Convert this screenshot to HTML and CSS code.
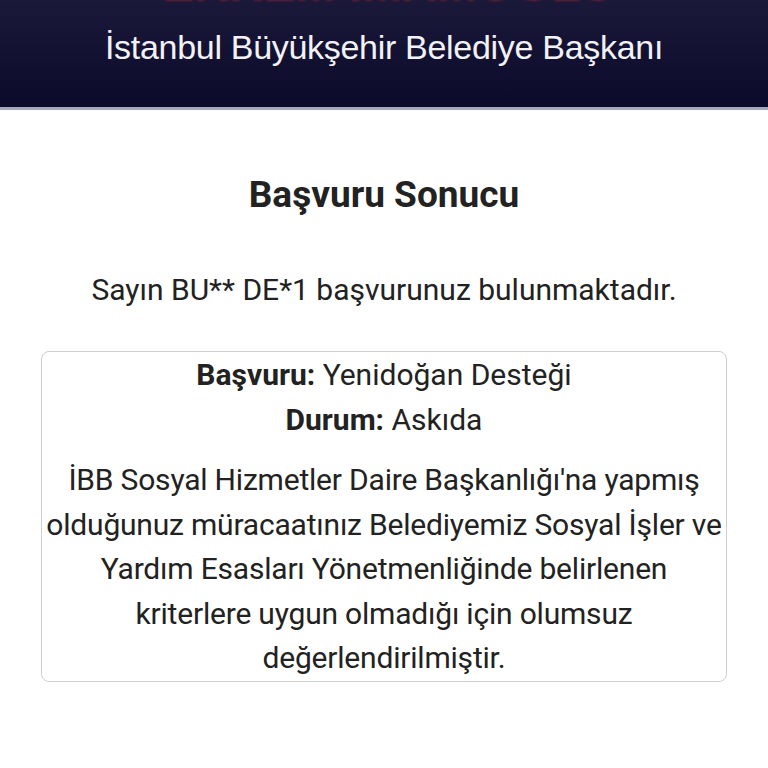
FILE: index.html
```html
<!DOCTYPE html>
<html lang="tr">
<head>
<meta charset="utf-8">
<link rel="stylesheet" href="styles.css">
</head>
<body>
<header class="hero">
  <div class="name">EKREM İMAMOĞLU</div>
  <div class="subtitle">İstanbul Büyükşehir Belediye Başkanı</div>
</header>
<main class="content">
  <h1 class="title">Başvuru Sonucu</h1>
  <p class="greeting">Sayın BU** DE*1 başvurunuz bulunmaktadır.</p>
  <div class="result">
    <div class="row"><b>Başvuru:</b> Yenidoğan Desteği</div>
    <div class="row"><b>Durum:</b> Askıda</div>
    <p class="desc">İBB Sosyal Hizmetler Daire Başkanlığı'na yapmış olduğunuz müracaatınız Belediyemiz Sosyal İşler ve Yardım Esasları Yönetmenliğinde belirlenen kriterlere uygun olmadığı için olumsuz değerlendirilmiştir.</p>
  </div>
</main>
</body>
</html>
```
FILE: styles.css
```css
html, body {
  margin: 0;
  padding: 0;
  background: #ffffff;
}
body {
  font-family: Roboto, "Liberation Sans", Arial, sans-serif;
  color: #222222;
}
.hero {
  height: 107px;
  background: linear-gradient(#1b1939, #0b0a2b);
  border-bottom: 3px solid #a3a8bc;
  overflow: hidden;
  text-align: center;
}
.name {
  font-family: "Liberation Sans", Arial, sans-serif;
  font-weight: bold;
  font-size: 48px;
  line-height: 48px;
  height: 48px;
  margin-top: -40px;
  padding-left: 10px;
  color: #e32f3b;
  white-space: nowrap;
  text-shadow: 0 0 3px rgba(255, 60, 60, 0.6);
}
.subtitle {
  font-family: "Liberation Sans", Arial, sans-serif;
  font-size: 34px;
  line-height: 40px;
  color: #f2f2f6;
  margin-top: 19px;
  letter-spacing: -0.3px;
}
.content {
  padding: 0 41px;
  text-align: center;
}
.title {
  font-size: 37px;
  font-weight: bold;
  margin: 63px 0 0;
  line-height: 44px;
  color: #222222;
}
.greeting {
  font-size: 30px;
  line-height: 44px;
  margin: 51px 0 0;
}
.result {
  margin-top: 39px;
  border: 1px solid #cfcfcf;
  border-radius: 8px;
  font-size: 30px;
  line-height: 45px;
}
.row b {
  font-weight: bold;
}
.desc {
  margin: 16px 0 0;
  line-height: 44.5px;
  letter-spacing: -0.2px;
}
```
